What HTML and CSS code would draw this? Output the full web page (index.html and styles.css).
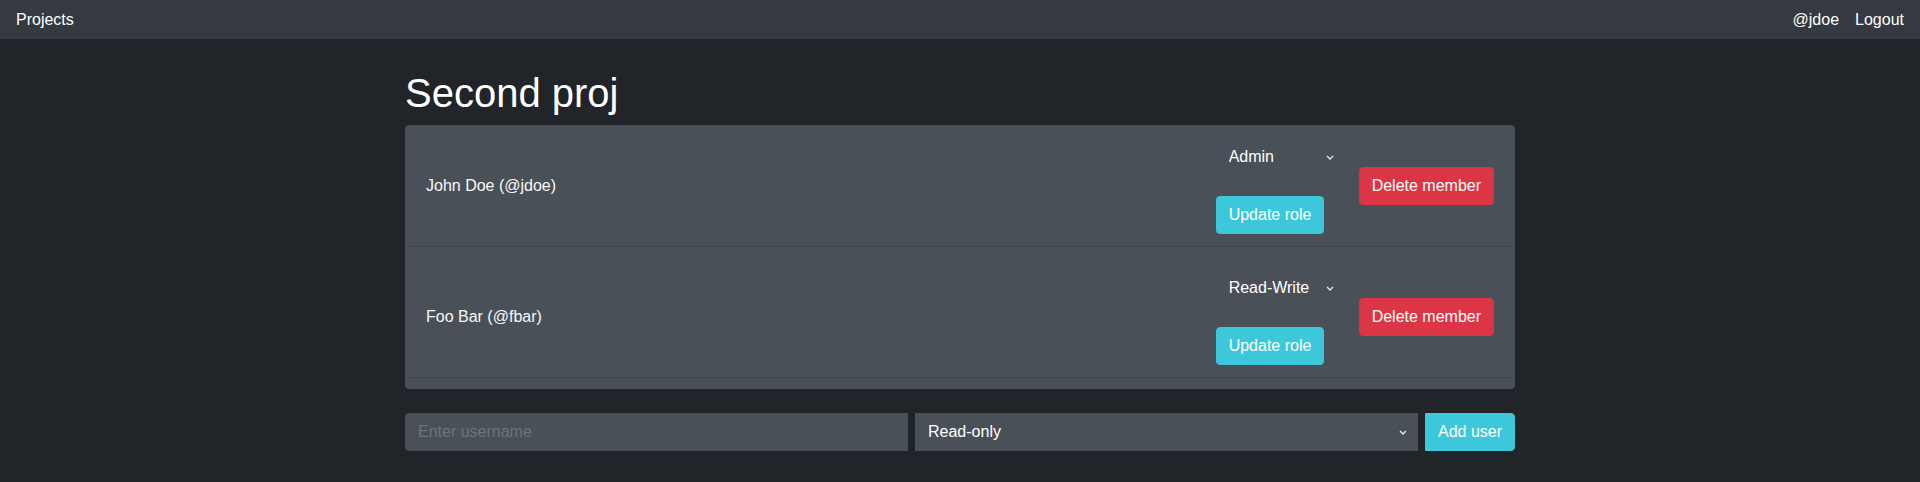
FILE: index.html
```html
<!DOCTYPE html>
<html lang="en">
<head>
<meta charset="utf-8">
<title>Second proj</title>
<link rel="stylesheet" href="styles.css">
</head>
<body>
<nav class="navbar">
  <a class="brand" href="#">Projects</a>
  <div class="nav-right">
    <a class="nav-link" href="#">@jdoe</a>
    <a class="nav-link" href="#">Logout</a>
  </div>
</nav>
<main class="container">
  <h1 class="title">Second proj</h1>
  <div class="card">
    <div class="member">
      <span class="member-name">John Doe (@jdoe)</span>
      <div class="member-actions">
        <form class="role-form">
          <select class="role-select">
            <option selected>Admin</option>
            <option>Read-Write</option>
            <option>Read-only</option>
          </select>
          <button type="button" class="btn btn-info">Update role</button>
        </form>
        <button type="button" class="btn btn-danger">Delete member</button>
      </div>
    </div>
    <div class="member">
      <span class="member-name">Foo Bar (@fbar)</span>
      <div class="member-actions">
        <form class="role-form">
          <select class="role-select">
            <option>Admin</option>
            <option selected>Read-Write</option>
            <option>Read-only</option>
          </select>
          <button type="button" class="btn btn-info">Update role</button>
        </form>
        <button type="button" class="btn btn-danger">Delete member</button>
      </div>
    </div>
  </div>
  <form class="add-form">
    <input class="field field-input" type="text" placeholder="Enter username">
    <select class="field field-select">
      <option selected>Read-only</option>
      <option>Read-Write</option>
      <option>Admin</option>
    </select>
    <button type="button" class="btn btn-info btn-add">Add user</button>
  </form>
</main>
</body>
</html>
```
FILE: styles.css
```css
* { box-sizing: border-box; }

html, body {
  margin: 0;
  padding: 0;
}

body {
  background: #212529;
  color: #f8f9fa;
  font-family: "Liberation Sans", Arial, sans-serif;
  font-size: 16px;
  line-height: 1.5;
}

a { color: inherit; text-decoration: none; }

.navbar {
  height: 39px;
  background: #343a40;
  display: flex;
  align-items: center;
  justify-content: space-between;
  padding: 0 16px;
}

.brand { color: #ffffff; }

.nav-right {
  display: flex;
  gap: 16px;
}

.nav-link { color: #ffffff; }

.container {
  width: 1110px;
  margin: 0 auto;
}

.title {
  font-size: 40px;
  font-weight: 500;
  line-height: 1.2;
  margin: 30px 0 8px;
  color: #ffffff;
}

.card {
  background: #495057;
  border: 1px solid #495057;
  border-radius: 4px;
}

.member {
  display: flex;
  align-items: center;
  justify-content: space-between;
  padding: 12px 20px;
  border-bottom: 1px solid #40464d;
  margin-bottom: 10px;
}

.member-actions {
  display: flex;
  align-items: center;
  gap: 11px;
}

.role-form {
  display: flex;
  flex-direction: column;
  align-items: flex-start;
  gap: 20px;
  margin: 0;
  width: 132px;
}

.role-select,
.field-select {
  -webkit-appearance: none;
  appearance: none;
  background-image: url("data:image/svg+xml,%3Csvg xmlns='http://www.w3.org/2000/svg' width='8' height='5' viewBox='0 0 8 5'%3E%3Cpath d='M1 1l3 3 3-3' fill='none' stroke='%23e9ecef' stroke-width='1.3'/%3E%3C/svg%3E");
  background-repeat: no-repeat;
  background-position: right 10px center;
  background-size: 8px 5px;
}

.role-select {
  width: 128px;
  height: 38px;
  background-color: transparent;
  color: #ffffff;
  border: none;
  font-family: inherit;
  font-size: 16px;
  line-height: 1.5;
  padding: 6px 28px 6px 13px;
  border-radius: 4px;
}

.role-select option,
.field-select option {
  background: #495057;
  color: #ffffff;
}

.btn {
  height: 38px;
  padding: 6px 12px;
  font-family: inherit;
  font-size: 16px;
  line-height: 1.5;
  border: 1px solid transparent;
  border-radius: 4px;
  color: #ffffff;
  white-space: nowrap;
}

.btn-info {
  background: #3cc8da;
  border-color: #3cc8da;
}

.btn-danger {
  background: #dc3545;
  border-color: #dc3545;
}

.add-form {
  display: flex;
  gap: 7px;
  margin: 24px 0 0;
}

.field {
  flex: none;
  width: 503px;
  height: 38px;
  background-color: #495057;
  color: #ffffff;
  border: 1px solid #495057;
  font-family: inherit;
  font-size: 16px;
  line-height: 1.5;
  padding: 6px 12px;
  border-radius: 0;
}

.field-input {
  border-radius: 4px 0 0 4px;
  outline: none;
}

.field-input::placeholder { color: #6c757d; }

.field-select {
  padding: 6px 28px 6px 12px;
}

.btn-add {
  border-radius: 0 4px 4px 0;
  width: 90px;
  flex: none;
}
```
